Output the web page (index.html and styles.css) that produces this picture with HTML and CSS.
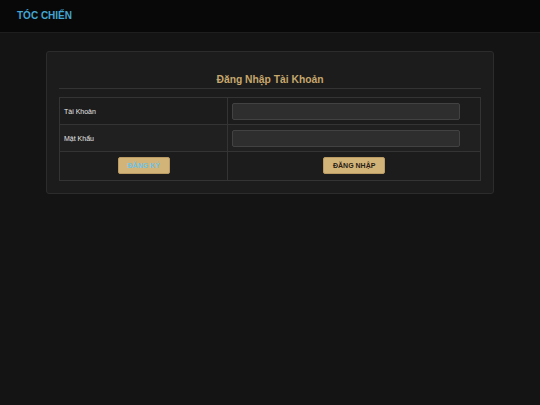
FILE: index.html
```html
<!DOCTYPE html>
<html lang="vi">
<head>
<meta charset="utf-8">
<title>Tóc Chiến - Đăng Nhập</title>
<link rel="stylesheet" href="styles.css">
</head>
<body>
<header class="topbar">
  <a class="brand" href="#">TÓC CHIẾN</a>
</header>
<main class="main">
  <section class="card">
    <h1 class="card-title">Đăng Nhập Tài Khoản</h1>
    <table class="login-table">
      <tr class="row">
        <td class="label-cell">Tài Khoản</td>
        <td class="input-cell"><input class="field" type="text"></td>
      </tr>
      <tr class="row row-alt">
        <td class="label-cell">Mật Khẩu</td>
        <td class="input-cell"><input class="field" type="password"></td>
      </tr>
      <tr class="row row-btn">
        <td class="btn-cell"><button class="btn btn-register">ĐĂNG KÝ</button></td>
        <td class="btn-cell"><button class="btn">ĐĂNG NHẬP</button></td>
      </tr>
    </table>
  </section>
</main>
</body>
</html>
```
FILE: styles.css
```css
html, body {
  margin: 0;
  padding: 0;
}
body {
  background: #141414;
  font-family: "Liberation Sans", Arial, sans-serif;
  color: #ddd;
  min-height: 405px;
}
.topbar {
  height: 33px;
  background: #080808;
  border-bottom: 1px solid #1e1e1e;
  display: flex;
  align-items: center;
  padding-left: 17px;
  box-sizing: border-box;
}
.brand {
  color: #43a6d2;
  font-weight: bold;
  font-size: 10px;
  text-decoration: none;
  line-height: 1;
}
.main {
  padding: 18px 46px 0 46px;
}
.card {
  background: #1c1c1c;
  border: 1px solid #2c2c2c;
  border-radius: 3px;
  padding: 0 12px 12px 12px;
}
.card-title {
  margin: 21px 0 8px 0;
  padding: 0 0 2px 0;
  font-size: 10.3px;
  line-height: 13px;
  font-weight: bold;
  color: #c6a76c;
  text-align: center;
  border-bottom: 1px solid #333;
}
.login-table {
  width: 100%;
  border-collapse: collapse;
  border: 1px solid #343434;
}
.login-table td {
  border: 1px solid #343434;
  padding: 0 4px;
  font-size: 7px;
  color: #e6e6e6;
}
.row {
  height: 27px;
}
.row-alt {
  background: #202020;
  height: 27px;
}
.row-btn {
  height: 29px;
}
.label-cell {
  width: 40%;
}
.input-cell {
  vertical-align: middle;
}
.field {
  display: block;
  width: 228px;
  height: 17px;
  box-sizing: border-box;
  background: #2e2e2e;
  border: 1px solid #424242;
  border-radius: 2px;
  margin: 0;
  padding: 0 4px;
  color: #ddd;
  font-size: 7px;
}
.row-alt .field {
  margin-top: 1px;
}
.btn-cell {
  text-align: center;
}
.btn {
  background: #d2b479;
  border: 1px solid #b89a62;
  border-radius: 2px;
  height: 17px;
  padding: 0 9px;
  font-family: "Liberation Sans", Arial, sans-serif;
  font-weight: bold;
  font-size: 7px;
  color: #2a2014;
  cursor: pointer;
  margin-top: -1px;
}
.btn-register {
  color: #6cc3e6;
}
```
